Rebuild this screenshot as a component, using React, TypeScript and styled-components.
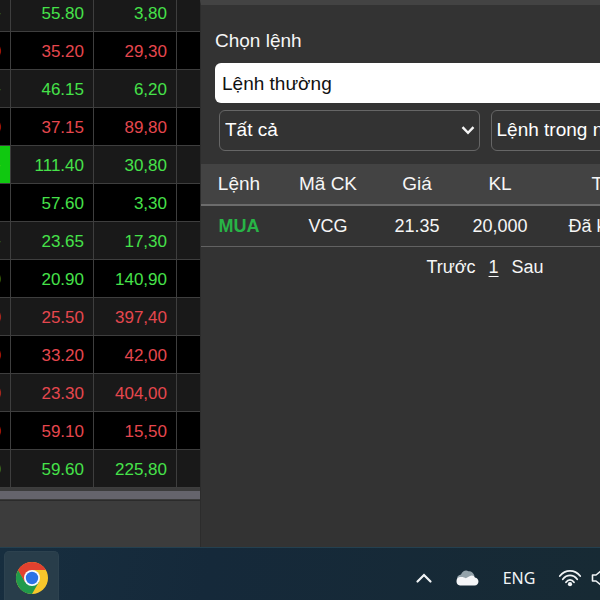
import React from "react";
import styled, { createGlobalStyle } from "styled-components";

const GlobalStyle = createGlobalStyle`
  * { box-sizing: border-box; }
  html, body, #root { height: 100%; }
  body {
    margin: 0;
    overflow: hidden;
    background: #333333;
    font-family: "Liberation Sans", Arial, sans-serif;
  }
`;

type Trend = "up" | "down";

const trendColors: Record<Trend, string> = { up: "#46e24a", down: "#e5474e" };

const quotes: { change: string; price: string; volume: string; trend: Trend; flash?: boolean }[] = [
  { change: "+", price: "55.80", volume: "3,80", trend: "up" },
  { change: "0", price: "35.20", volume: "29,30", trend: "down" },
  { change: "+", price: "46.15", volume: "6,20", trend: "up" },
  { change: "0", price: "37.15", volume: "89,80", trend: "down" },
  { change: "+", price: "111.40", volume: "30,80", trend: "up", flash: true },
  { change: "", price: "57.60", volume: "3,30", trend: "up" },
  { change: "+", price: "23.65", volume: "17,30", trend: "up" },
  { change: "0", price: "20.90", volume: "140,90", trend: "up" },
  { change: "0", price: "25.50", volume: "397,40", trend: "down" },
  { change: "0", price: "33.20", volume: "42,00", trend: "down" },
  { change: "0", price: "23.30", volume: "404,00", trend: "down" },
  { change: "0", price: "59.10", volume: "15,50", trend: "down" },
  { change: "0", price: "59.60", volume: "225,80", trend: "up" },
];

const Screen = styled.div`
  display: flex;
  flex-direction: column;
  height: 100vh;
  overflow: hidden;
`;

const Workspace = styled.main`
  flex: 1;
  min-height: 0;
  display: grid;
  grid-template-columns: 200px 1fr;
`;

const Board = styled.section`
  overflow: hidden;
  background: #3c3c3c;
`;

const QuoteTable = styled.table`
  width: 275px;
  margin: -6px 0 0 -74px;
  table-layout: fixed;
  border-collapse: separate;
  border-spacing: 0;
  font-size: 17px;
`;

const Col = styled.col<{ $width: number }>`
  width: ${(p) => p.$width}px;
`;

const QuoteRow = styled.tr<{ $trend: Trend }>`
  height: 38px;
  background: #000000;
  color: ${(p) => trendColors[p.$trend]};
  &:nth-child(odd) { background: #191919; }
`;

const QuoteCell = styled.td<{ $flash?: boolean }>`
  padding: 3px 9px 0 0;
  line-height: 20px;
  text-align: right;
  border-right: 1px solid #3e3e3e;
  border-bottom: 1px solid #3e3e3e;
  ${(p) => p.$flash && "background: #10c810;"}
`;

const ScrollTrack = styled.div`
  margin-top: 2px;
  padding: 1px 0;
  border-bottom: 1px solid #2b2b2b;
`;

const ScrollThumb = styled.div`
  height: 8px;
  background: #65646c;
`;

const OrderPanel = styled.section`
  min-width: 0;
  overflow: hidden;
  background: #333333;
  border-left: 1px solid #2c2c2c;
  border-top: 5px solid #434343;
  color: #f6f6f6;
`;

const PanelBody = styled.div`
  width: 568px;
`;

const Fields = styled.form`
  display: flex;
  flex-direction: column;
  padding: 22px 14px 0;
`;

const FieldLabel = styled.label`
  font-size: 19px;
  line-height: 28px;
  margin-bottom: 8px;
`;

const OrderKind = styled.select`
  appearance: none;
  height: 40px;
  padding: 0 7px;
  border: 0;
  border-radius: 6px;
  background: #ffffff;
  color: #111111;
  font: 19px "Liberation Sans", Arial, sans-serif;
`;

const FilterRow = styled.div`
  display: grid;
  grid-template-columns: 1fr 1fr;
  gap: 11px;
  padding: 7px 4px 0;
`;

const FilterBox = styled.div`
  position: relative;
  display: grid;
`;

const Filter = styled.select`
  appearance: none;
  height: 41px;
  padding: 0 5px 2px;
  border: 1px solid #666666;
  border-radius: 6px;
  background: #333333;
  color: #ffffff;
  font: 19px "Liberation Sans", Arial, sans-serif;
`;

const FilterArrow = styled.svg`
  position: absolute;
  right: 5px;
  top: 14px;
  pointer-events: none;
`;

const OrderTable = styled.table`
  width: 100%;
  margin-top: 13px;
  table-layout: fixed;
  border-collapse: separate;
  border-spacing: 0;
  text-align: center;
`;

const HeadCell = styled.th`
  height: 42px;
  padding: 0 0 1px;
  background: #434343;
  border-bottom: 2px solid #6c6c6c;
  font-size: 19px;
  font-weight: 400;
`;

const OrderCell = styled.td<{ $buy?: boolean }>`
  height: 41px;
  padding: 0;
  border-bottom: 1px solid #626262;
  font-size: 18px;
  ${(p) => p.$buy && "color: #28b446; font-weight: 700;"}
`;

const Pager = styled.nav`
  display: flex;
  justify-content: center;
  gap: 13px;
  padding-top: 10px;
  line-height: 20px;
`;

const PageButton = styled.button<{ $current?: boolean }>`
  padding: 0;
  border: 0;
  background: none;
  color: inherit;
  font: 18px/20px "Liberation Sans", Arial, sans-serif;
  text-decoration: ${(p) => (p.$current ? "underline" : "none")};
  text-underline-offset: 3px;
`;

const Taskbar = styled.footer`
  display: flex;
  align-items: stretch;
  justify-content: space-between;
  height: 53px;
  overflow: hidden;
  padding: 3px 0 0 4px;
  border-top: 1px solid #24404f;
  background: linear-gradient(100deg, #172e3f, #15293a 35%, #172a34);
`;

const AppButton = styled.button`
  display: grid;
  place-items: center;
  width: 55px;
  padding: 4px 0 0;
  border: 1px solid #2d424f;
  border-bottom: 0;
  border-radius: 5px 5px 0 0;
  background: #283d4a;
`;

const Tray = styled.div`
  display: flex;
  align-items: center;
  padding-top: 4px;
  width: 197px;
  flex: none;
  color: #f1f4f6;
`;

const TrayButton = styled.button<{ $width: number }>`
  display: grid;
  place-items: center;
  flex: none;
  width: ${(p) => p.$width}px;
  height: 40px;
  padding: 0;
  border: 0;
  background: none;
  color: inherit;
  font: 16px "Noto Sans", sans-serif;
`;

const Arrow = () => (
  <FilterArrow width="14" height="12" viewBox="0 0 14 12" aria-hidden="true">
    <path d="M1.5 3.2 7 8.8l5.5-5.6" fill="none" stroke="#f5f5f5" strokeWidth="2.4" />
  </FilterArrow>
);

const ChromeIcon = () => (
  <svg width="34" height="34" viewBox="0 0 34 34" aria-hidden="true">
    <circle cx="17" cy="17" r="16" fill="#f8c72b" />
    <path d="M3.14 9A16 16 0 0 1 30.86 9L17 9 10.07 21Z" fill="#e2412f" />
    <path d="M3.14 9A16 16 0 0 0 17 33L23.93 21 10.07 21Z" fill="#219a4b" />
    <path d="M3.14 9 10.07 21 17 17V9Z" fill="#e2412f" />
    <circle cx="17" cy="17" r="8" fill="#f5f9ff" />
    <circle cx="17" cy="17" r="6.2" fill="#2c72e6" />
  </svg>
);

const App = () => (
  <Screen>
    <GlobalStyle />
    <Workspace>
      <Board>
        <QuoteTable>
          <colgroup>
            <Col $width={85} />
            <Col $width={83} />
            <Col $width={83} />
            <Col $width={24} />
          </colgroup>
          <tbody>
            {quotes.map((q) => (
              <QuoteRow key={q.price} $trend={q.trend}>
                <QuoteCell $flash={q.flash}>{q.change}</QuoteCell>
                <QuoteCell>{q.price}</QuoteCell>
                <QuoteCell>{q.volume}</QuoteCell>
                <QuoteCell />
              </QuoteRow>
            ))}
          </tbody>
        </QuoteTable>
        <ScrollTrack>
          <ScrollThumb />
        </ScrollTrack>
      </Board>
      <OrderPanel>
        <PanelBody>
          <Fields>
            <FieldLabel htmlFor="order-kind">Chọn lệnh</FieldLabel>
            <OrderKind id="order-kind">
              <option>Lệnh thường</option>
            </OrderKind>
            <FilterRow>
              <FilterBox>
                <Filter aria-label="Loại lệnh">
                  <option>Tất cả</option>
                </Filter>
                <Arrow />
              </FilterBox>
              <FilterBox>
                <Filter aria-label="Thời gian">
                  <option>Lệnh trong ngày</option>
                </Filter>
                <Arrow />
              </FilterBox>
            </FilterRow>
          </Fields>
          <OrderTable>
            <colgroup>
              <Col $width={76} />
              <Col $width={102} />
              <Col $width={76} />
              <Col $width={90} />
              <Col $width={116} />
              <Col $width={108} />
            </colgroup>
            <thead>
              <tr>
                <HeadCell>Lệnh</HeadCell>
                <HeadCell>Mã CK</HeadCell>
                <HeadCell>Giá</HeadCell>
                <HeadCell>KL</HeadCell>
                <HeadCell>TT</HeadCell>
                <HeadCell />
              </tr>
            </thead>
            <tbody>
              <tr>
                <OrderCell $buy>MUA</OrderCell>
                <OrderCell>VCG</OrderCell>
                <OrderCell>21.35</OrderCell>
                <OrderCell>20,000</OrderCell>
                <OrderCell>Đã khớp</OrderCell>
                <OrderCell />
              </tr>
            </tbody>
          </OrderTable>
          <Pager>
            <PageButton>Trước</PageButton>
            <PageButton $current>1</PageButton>
            <PageButton>Sau</PageButton>
          </Pager>
        </PanelBody>
      </OrderPanel>
    </Workspace>
    <Taskbar>
      <AppButton aria-label="Chrome">
        <ChromeIcon />
      </AppButton>
      <Tray>
        <TrayButton $width={42} aria-label="Hidden icons">
          <svg width="18" height="14" viewBox="0 0 18 14">
            <path d="M2.5 10.5 9 4l6.5 6.5" fill="none" stroke="currentColor" strokeWidth="2.2" strokeLinecap="round" />
          </svg>
        </TrayButton>
        <TrayButton $width={44} aria-label="OneDrive">
          <svg width="24" height="18" viewBox="0 0 24 18">
            <path d="M2 11A5 5 0 0 1 6 5.5C7.5 1.6 11 .9 13.5 2.2 16 1.8 18.500 3.500 19.500 7L14 12H3Z" fill="#93a2aa" />
            <path d="M5 16.500a4.300 4.300 0 0 1-.2-8.400c2.600-.6 4.500.2 6 1.200l3.700-2c2.400-1.400 4.600-.6 5.400 1.200 5 .6 4.600 8-.4 8Z" fill="#f5f6f8" />
          </svg>
        </TrayButton>
        <TrayButton $width={60}>ENG</TrayButton>
        <TrayButton $width={42} aria-label="Wi-Fi">
          <svg width="24" height="18" viewBox="0 0 24 18">
            <g fill="none" stroke="currentColor" strokeWidth="1.8" strokeLinecap="round">
              <path d="M1.8 7C7.4.2 16.6.2 22.2 7" />
              <path d="M4.800 10.200c4-5 10.400-5 14.400 0" />
              <path d="M8 13.200c2.200-3 5.800-3 8 0" />
            </g>
            <circle cx="12" cy="15.200" r="2.100" fill="currentColor" />
          </svg>
        </TrayButton>
        <TrayButton $width={20} aria-label="Volume">
          <svg width="20" height="18" viewBox="0 0 20 18">
            <path d="M1.500 6H5l5.500-4.500v15L5 12H1.500Z" fill="none" stroke="currentColor" strokeWidth="1.600" strokeLinejoin="round" />
            <path d="M14 6c1.500 2 1.500 4 0 6" fill="none" stroke="currentColor" strokeWidth="1.600" />
          </svg>
        </TrayButton>
      </Tray>
    </Taskbar>
  </Screen>
);

export default App;
